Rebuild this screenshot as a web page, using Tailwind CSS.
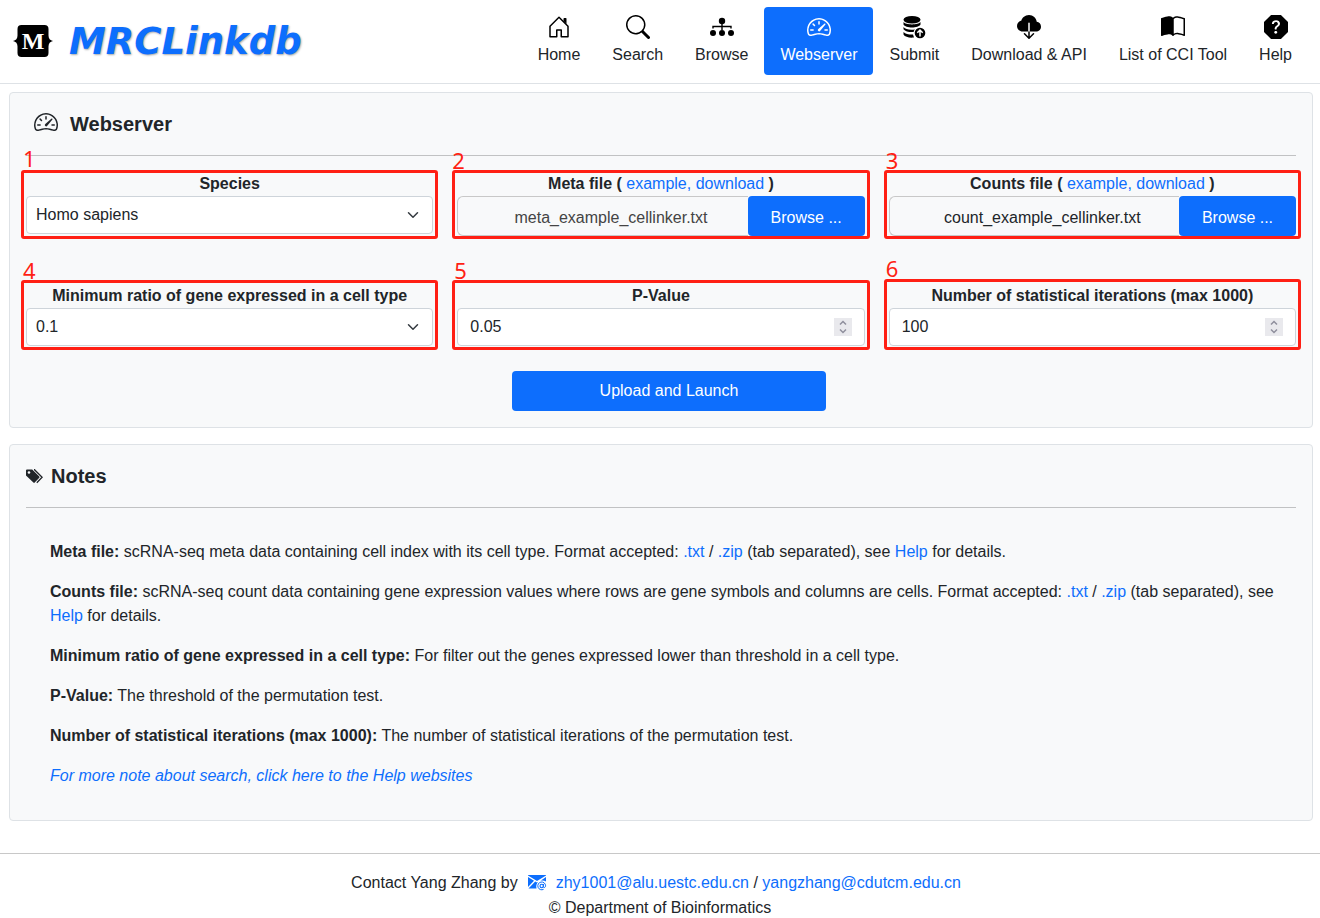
<!DOCTYPE html>
<html lang="en">
<head>
<meta charset="utf-8">
<meta name="viewport" content="width=device-width, initial-scale=1">
<title>MRCLinkdb - Webserver</title>
<script src="https://cdn.jsdelivr.net/npm/@tailwindcss/browser@4"></script>
</head>
<body class="bg-white font-['Liberation_Sans',Arial,sans-serif] text-base text-[#212529]">
<svg class="hidden" aria-hidden="true">
  <symbol id="speedometer" viewBox="0 0 16 16"><path d="M8 4a.5.5 0 0 1 .5.5V6a.5.5 0 0 1-1 0V4.500A.5.5 0 0 1 8 4zM3.732 5.732a.5.5 0 0 1 .707 0l.915.914a.5.5 0 1 1-.708.708l-.914-.915a.5.5 0 0 1 0-.707zM2 10a.5.5 0 0 1 .5-.5h1.586a.5.5 0 0 1 0 1H2.500A.5.5 0 0 1 2 10zm9.500 0a.5.5 0 0 1 .5-.5h1.500a.5.5 0 0 1 0 1H12a.5.5 0 0 1-.5-.5zm.754-4.246a.389.389 0 0 0-.527-.02L7.547 9.310a.91.91 0 1 0 1.302 1.258l3.434-4.297a.389.389 0 0 0-.029-.518z"/><path fill-rule="evenodd" d="M0 10a8 8 0 1 1 15.547 2.661c-.442 1.253-1.845 1.602-2.932 1.250C11.309 13.488 9.475 13 8 13c-1.474 0-3.310.488-4.615.911-1.087.352-2.490.003-2.932-1.250A7.988 7.988 0 0 1 0 10zm8-7a7 7 0 0 0-6.603 9.329c.203.575.923.876 1.680.630C4.397 12.533 6.358 12 8 12s3.604.532 4.923.960c.757.245 1.477-.056 1.680-.631A7 7 0 0 0 8 3z"/></symbol>
  <symbol id="chevron" viewBox="0 0 16 16"><path d="m2 5 6 6 6-6" fill="none" stroke="#343a40" stroke-width="2" stroke-linecap="round" stroke-linejoin="round"/></symbol>
  <symbol id="spinner" viewBox="0 0 18 18"><path fill="#e9e9ed" d="M0 0h18v18H0z"/><path d="m6 6.500 3-3 3 3M6 11.500l3 3 3-3" fill="none" stroke="#8f8f9d" stroke-width="1.500"/></symbol>
</svg>

<header class="flex items-start justify-between border-b border-[#dee2e6] pt-[7px] pr-3 pb-2 pl-[13px]">
  <a href="#" class="flex h-[68px] items-center gap-4">
    <svg class="h-8 w-10" viewBox="0 0 40 32" aria-hidden="true"><path d="M8.500 0h23a4 4 0 0 1 4 4v6.500c0 3 1.500 5 4.500 5.500-3 .5-4.500 2.500-4.500 5.500V28a4 4 0 0 1-4 4h-23a4 4 0 0 1-4-4v-6.500c0-3-1.500-5-4.500-5.500 3-.5 4.500-2.500 4.500-5.500V4a4 4 0 0 1 4-4z"/><text x="20" y="24" text-anchor="middle" fill="#fff" class="font-['Liberation_Serif',serif] text-[24px] font-bold">M</text></svg>
    <span class="font-['DejaVu_Sans',sans-serif] text-[37px] font-bold italic leading-none text-[#0d6efd] [text-shadow:1px_1px_2px_#aaa]">MRCLinkdb</span>
  </a>
  <nav class="flex text-[#212529]" aria-label="Main">
    <a href="#" class="flex flex-col items-center gap-1 px-4 py-2">
      <svg class="size-6 fill-black" viewBox="0 0 16 16" aria-hidden="true"><path d="M7.646 1.146a.5.5 0 0 1 .708 0l6 6a.5.5 0 0 1 .146.354v7a.5.5 0 0 1-.5.5H9.500a.5.5 0 0 1-.5-.5v-4H7v4a.5.5 0 0 1-.5.5H2a.5.5 0 0 1-.5-.5v-7a.5.5 0 0 1 .146-.354l6-6zM2.500 7.707V14H6v-4a.5.5 0 0 1 .5-.5h3a.5.5 0 0 1 .5.5v4h3.500V7.707L8 2.207l-5.500 5.500z"/><path d="M13 2.500V6l-2-2V2.500a.5.5 0 0 1 .5-.5h1a.5.5 0 0 1 .5.5z"/></svg>
      <span>Home</span></a>
    <a href="#" class="flex flex-col items-center gap-1 px-4 py-2">
      <svg class="size-6 fill-black" viewBox="0 0 16 16" aria-hidden="true"><path d="M11.742 10.344a6.500 6.500 0 1 0-1.397 1.398h-.001c.030.040.062.078.098.115l3.850 3.850a1 1 0 0 0 1.415-1.414l-3.850-3.850a1.007 1.007 0 0 0-.115-.1zM12 6.500a5.500 5.500 0 1 1-11 0 5.500 5.500 0 0 1 11 0z"/></svg>
      <span>Search</span></a>
    <a href="#" class="flex flex-col items-center gap-1 px-4 py-2">
      <svg class="size-6 fill-black" viewBox="0 0 24 24" aria-hidden="true"><circle cx="12" cy="6" r="3.200"/><circle cx="3" cy="18" r="3"/><circle cx="12" cy="18" r="3"/><circle cx="21" cy="18" r="3"/><path d="M12 8v7M3 13.500v-2h18v2" fill="none" stroke="#000" stroke-width="1.400"/></svg>
      <span>Browse</span></a>
    <a href="#" aria-current="page" class="flex flex-col items-center gap-1 rounded bg-[#0d6efd] px-4 py-2 text-white">
      <svg class="size-6 fill-white" aria-hidden="true"><use href="#speedometer"/></svg>
      <span>Webserver</span></a>
    <a href="#" class="flex flex-col items-center gap-1 px-4 py-2">
      <svg class="size-6 fill-black" viewBox="0 0 24 24" aria-hidden="true"><ellipse cx="10" cy="4.800" rx="8.500" ry="3.800"/><path d="M1.500 7c2 3.200 15 3.200 17 0v2.500c-2 4-15 4-17 0zM1.500 12c2 2.700 7 3.200 11.500 2.400L12 17c-4 .4-8.500-.2-10.500-2.700zM1.500 17c2 2 5 2.700 9.500 2.600l1 2.900c-4.500.5-9-.4-10.500-3z"/><circle cx="18" cy="18" r="6.300" fill="#fff"/><circle cx="18" cy="18" r="5.300"/><path d="M18 21.500v-6M15.300 17.700 18 15l2.700 2.700" fill="none" stroke="#fff" stroke-width="1.500"/></svg>
      <span>Submit</span></a>
    <a href="#" class="flex flex-col items-center gap-1 px-4 py-2">
      <svg class="size-6 fill-black" viewBox="0 0 16 16" aria-hidden="true"><path d="M8 0a5.530 5.530 0 0 0-3.594 1.342c-.766.660-1.321 1.520-1.464 2.383C1.266 4.095 0 5.555 0 7.318 0 9.366 1.708 11 3.781 11H7.500V5.500a.5.5 0 0 1 1 0V11h4.188C14.502 11 16 9.570 16 7.773c0-1.636-1.242-2.969-2.834-3.194C12.923 1.999 10.690 0 8 0zm-.354 15.854a.5.5 0 0 0 .708 0l3-3a.5.5 0 0 0-.708-.708L8.500 14.293V11h-1v3.293l-2.146-2.147a.5.5 0 0 0-.708.708l3 3z"/></svg>
      <span>Download &amp; API</span></a>
    <a href="#" class="flex flex-col items-center gap-1 px-4 py-2">
      <svg class="size-6 fill-black" viewBox="0 0 16 16" aria-hidden="true"><path d="M8.500 2.687c.654-.689 1.782-.886 3.112-.752 1.234.124 2.503.523 3.388.893v9.923c-.918-.350-2.107-.692-3.287-.810-1.094-.111-2.278-.039-3.213.492V2.687zM8 1.783C7.015.936 5.587.810 4.287.940c-1.514.153-3.042.672-3.994 1.105A.5.5 0 0 0 0 2.500v11a.5.5 0 0 0 .707.455c.882-.4 2.303-.881 3.680-1.020 1.409-.142 2.590.087 3.223.877a.5.5 0 0 0 .780 0c.633-.790 1.814-1.019 3.222-.877 1.378.139 2.800.620 3.681 1.020A.5.5 0 0 0 16 13.500v-11a.5.5 0 0 0-.293-.455c-.952-.433-2.480-.952-3.994-1.105C10.413.809 8.985.936 8 1.783z"/></svg>
      <span>List of CCI Tool</span></a>
    <a href="#" class="flex flex-col items-center gap-1 px-4 py-2">
      <svg class="size-6 fill-black" viewBox="0 0 16 16" aria-hidden="true"><path d="M11.460.146A.5.5 0 0 0 11.107 0H4.893a.5.5 0 0 0-.353.146L.146 4.540A.5.5 0 0 0 0 4.893v6.214a.5.5 0 0 0 .146.353l4.394 4.394a.5.5 0 0 0 .353.146h6.214a.5.5 0 0 0 .353-.146l4.394-4.394a.5.5 0 0 0 .146-.353V4.893a.5.5 0 0 0-.146-.353L11.460.146zM5.496 6.033a.237.237 0 0 1-.240-.247C5.350 4.091 6.737 3.500 8.005 3.500c1.396 0 2.672.730 2.672 2.240 0 1.080-.635 1.594-1.244 2.057-.737.559-1.010.768-1.010 1.486v.105a.25.25 0 0 1-.25.25h-.810a.25.25 0 0 1-.25-.246l-.004-.217c-.038-.927.495-1.498 1.168-1.987.590-.444.965-.736.965-1.371 0-.825-.628-1.168-1.314-1.168-.803 0-1.253.478-1.342 1.134-.018.137-.128.25-.266.25h-.825zm2.325 6.443c-.584 0-1.009-.394-1.009-.927 0-.552.425-.940 1.010-.940.609 0 1.028.388 1.028.940 0 .533-.420.927-1.029.927z"/></svg>
      <span>Help</span></a>
  </nav>
</header>

<main class="flex flex-col gap-4 pt-2 pr-[7px] pl-[9px]">
  <section class="rounded border border-[#dee2e6] bg-[#f8f9fa] p-4">
    <h1 class="flex h-[30px] items-center gap-3 pl-2 text-xl font-bold">
      <svg class="mb-1 size-6 fill-current" aria-hidden="true"><use href="#speedometer"/></svg>Webserver</h1>
    <hr class="my-4 border-[#c1c2c3]">
    <form>
      <div class="grid grid-cols-3 gap-x-6 gap-y-12">
        <div class="relative">
          <label for="species" class="block text-center font-bold">Species</label>
          <div class="relative">
            <select id="species" class="h-[38px] w-full appearance-none rounded border border-[#ced4da] bg-white px-[9px]"><option>Homo sapiens</option><option>Mus musculus</option></select>
            <svg class="pointer-events-none absolute top-[13px] right-[14px] h-3 w-3" aria-hidden="true"><use href="#chevron"/></svg>
          </div>
          <div class="pointer-events-none absolute -inset-x-[5px] -top-0.5 h-[69px] rounded-[3px] border-3 border-[#ff1f14]"></div>
          <span class="absolute -top-[26px] -left-[3px] font-['Noto_Sans',sans-serif] text-[22px] leading-6 text-[#ff1f14]">1</span>
        </div>
        <div class="relative">
          <label for="meta" class="block text-center font-bold">Meta file ( <a href="#" class="font-normal text-[#0d6efd]">example,</a> <a href="#" class="font-normal text-[#0d6efd]">download</a> )</label>
          <div class="flex h-10">
            <input id="meta" type="text" readonly value="meta_example_cellinker.txt" class="min-w-0 flex-1 rounded-l-md border border-r-0 border-[#c8c8c8] bg-transparent pr-3 pl-7 pt-1 text-center text-[#444]">
            <button type="button" class="w-[117px] rounded bg-[#0d6efd] pt-1 text-white">Browse ...</button>
          </div>
          <div class="pointer-events-none absolute -inset-x-[5px] -top-0.5 h-[69px] rounded-[3px] border-3 border-[#ff1f14]"></div>
          <span class="absolute -top-6 -left-[5px] font-['Noto_Sans',sans-serif] text-[22px] leading-6 text-[#ff1f14]">2</span>
        </div>
        <div class="relative">
          <label for="counts" class="block text-center font-bold">Counts file ( <a href="#" class="font-normal text-[#0d6efd]">example,</a> <a href="#" class="font-normal text-[#0d6efd]">download</a> )</label>
          <div class="flex h-10">
            <input id="counts" type="text" readonly value="count_example_cellinker.txt" class="min-w-0 flex-1 rounded-l-md border border-r-0 border-[#c8c8c8] bg-transparent pr-3 pl-7 pt-1 text-center">
            <button type="button" class="w-[117px] rounded bg-[#0d6efd] pt-1 text-white">Browse ...</button>
          </div>
          <div class="pointer-events-none absolute -inset-x-[5px] -top-0.5 h-[69px] rounded-[3px] border-3 border-[#ff1f14]"></div>
          <span class="absolute -top-6 -left-[3px] font-['Noto_Sans',sans-serif] text-[22px] leading-6 text-[#ff1f14]">3</span>
        </div>
        <div class="relative">
          <label for="ratio" class="block text-center font-bold">Minimum ratio of gene expressed in a cell type</label>
          <div class="relative">
            <select id="ratio" class="h-[38px] w-full appearance-none rounded border border-[#ced4da] bg-white px-[9px]"><option>0.1</option><option>0.2</option></select>
            <svg class="pointer-events-none absolute top-[13px] right-[14px] h-3 w-3" aria-hidden="true"><use href="#chevron"/></svg>
          </div>
          <div class="pointer-events-none absolute -inset-x-[5px] -top-1 h-[70px] rounded-[3px] border-3 border-[#ff1f14]"></div>
          <span class="absolute -top-[26px] -left-[3px] font-['Noto_Sans',sans-serif] text-[22px] leading-6 text-[#ff1f14]">4</span>
        </div>
        <div class="relative">
          <label for="pvalue" class="block text-center font-bold">P-Value</label>
          <div class="relative">
            <input id="pvalue" type="number" step="0.01" value="0.05" class="h-[38px] w-full appearance-none rounded border border-[#ced4da] bg-white px-3 [-moz-appearance:textfield] [&::-webkit-inner-spin-button]:appearance-none">
            <svg class="pointer-events-none absolute top-[10px] right-[13px] size-[18px]" aria-hidden="true"><use href="#spinner"/></svg>
          </div>
          <div class="pointer-events-none absolute -inset-x-[5px] -top-1 h-[70px] rounded-[3px] border-3 border-[#ff1f14]"></div>
          <span class="absolute -top-[26px] -left-[3px] font-['Noto_Sans',sans-serif] text-[22px] leading-6 text-[#ff1f14]">5</span>
        </div>
        <div class="relative">
          <label for="iterations" class="block text-center font-bold">Number of statistical iterations (max 1000)</label>
          <div class="relative">
            <input id="iterations" type="number" max="1000" value="100" class="h-[38px] w-full appearance-none rounded border border-[#ced4da] bg-white px-3 [-moz-appearance:textfield] [&::-webkit-inner-spin-button]:appearance-none">
            <svg class="pointer-events-none absolute top-[10px] right-[13px] size-[18px]" aria-hidden="true"><use href="#spinner"/></svg>
          </div>
          <div class="pointer-events-none absolute -inset-x-[5px] -top-[5px] h-[71px] rounded-[3px] border-3 border-[#ff1f14]"></div>
          <span class="absolute -top-7 -left-[3px] font-['Noto_Sans',sans-serif] text-[22px] leading-6 text-[#ff1f14]">6</span>
        </div>
      </div>
      <div class="mt-[25px] flex justify-center pl-4">
        <button type="submit" class="h-10 w-1/4 rounded bg-[#0d6efd] text-white">Upload and Launch</button>
      </div>
    </form>
  </section>

  <section class="rounded border border-[#dee2e6] bg-[#f8f9fa] p-4">
    <h2 class="flex h-[30px] items-center gap-2 text-xl font-bold">
      <svg class="h-[17px] w-[17px]" viewBox="0 0 17 17" aria-hidden="true"><path d="M0 2.500A1 1 0 0 1 1 1.500h5.200l7.100 7a1 1 0 0 1 0 1.300l-4.600 4.800a1 1 0 0 1-1.300 0L0 7.500z" fill="#212529"/><circle cx="3" cy="4.500" r="1.300" fill="#f8f9fa"/><path d="M8 1.700h.5l7.600 7.500-5.300 5.600" fill="none" stroke="#212529" stroke-width="1.300"/></svg>Notes</h2>
    <hr class="my-4 border-[#c1c2c3]">
    <div class="flex flex-col gap-4 pt-4 pr-4 pb-4 pl-6">
      <p><b>Meta file:</b> scRNA-seq meta data containing cell index with its cell type. Format accepted: <a href="#" class="text-[#0d6efd]">.txt</a> / <a href="#" class="text-[#0d6efd]">.zip</a> (tab separated), see <a href="#" class="text-[#0d6efd]">Help</a> for details.</p>
      <p><b>Counts file:</b> scRNA-seq count data containing gene expression values where rows are gene symbols and columns are cells. Format accepted: <a href="#" class="text-[#0d6efd]">.txt</a> / <a href="#" class="text-[#0d6efd]">.zip</a> (tab separated), see <a href="#" class="text-[#0d6efd]">Help</a> for details.</p>
      <p><b>Minimum ratio of gene expressed in a cell type:</b> For filter out the genes expressed lower than threshold in a cell type.</p>
      <p><b>P-Value:</b> The threshold of the permutation test.</p>
      <p><b>Number of statistical iterations (max 1000):</b> The number of statistical iterations of the permutation test.</p>
      <p><a href="#" class="italic text-[#0d6efd]">For more note about search, click here to the Help websites</a></p>
    </div>
  </section>
</main>

<footer class="mt-8 border-t border-[#c8c8c8] pt-4 text-center leading-[25px]">
  <p class="flex items-center justify-center gap-[9px] pr-2">
    <span>Contact Yang Zhang by</span>
    <svg class="h-4 w-5" viewBox="0 0 20 16" aria-hidden="true"><path fill="#0d6efd" d="M1 0h18v.6L10 6 1 .600zM1 2l6 3.700L1 12zM19 2v4.500c-1.500-1-3.500-1.300-5.500-.8zM8.200 6.500 10 7.600l1.500-.9c-2 1.500-2.700 4-2 6.800H1.500z"/><circle cx="14.700" cy="11" r="1.700" fill="none" stroke="#0d6efd" stroke-width="1.100"/><path d="M16.400 9v2.500c0 1.500 2.200 1.300 2.200-.7a3.900 3.900 0 1 0-2 3.500" fill="none" stroke="#0d6efd" stroke-width="1"/></svg>
    <span><a href="#" class="text-[#0d6efd]">zhy1001@alu.uestc.edu.cn</a> / <a href="#" class="text-[#0d6efd]">yangzhang@cdutcm.edu.cn</a></span>
  </p>
  <p>© Department of Bioinformatics</p>
</footer>
</body>
</html>
